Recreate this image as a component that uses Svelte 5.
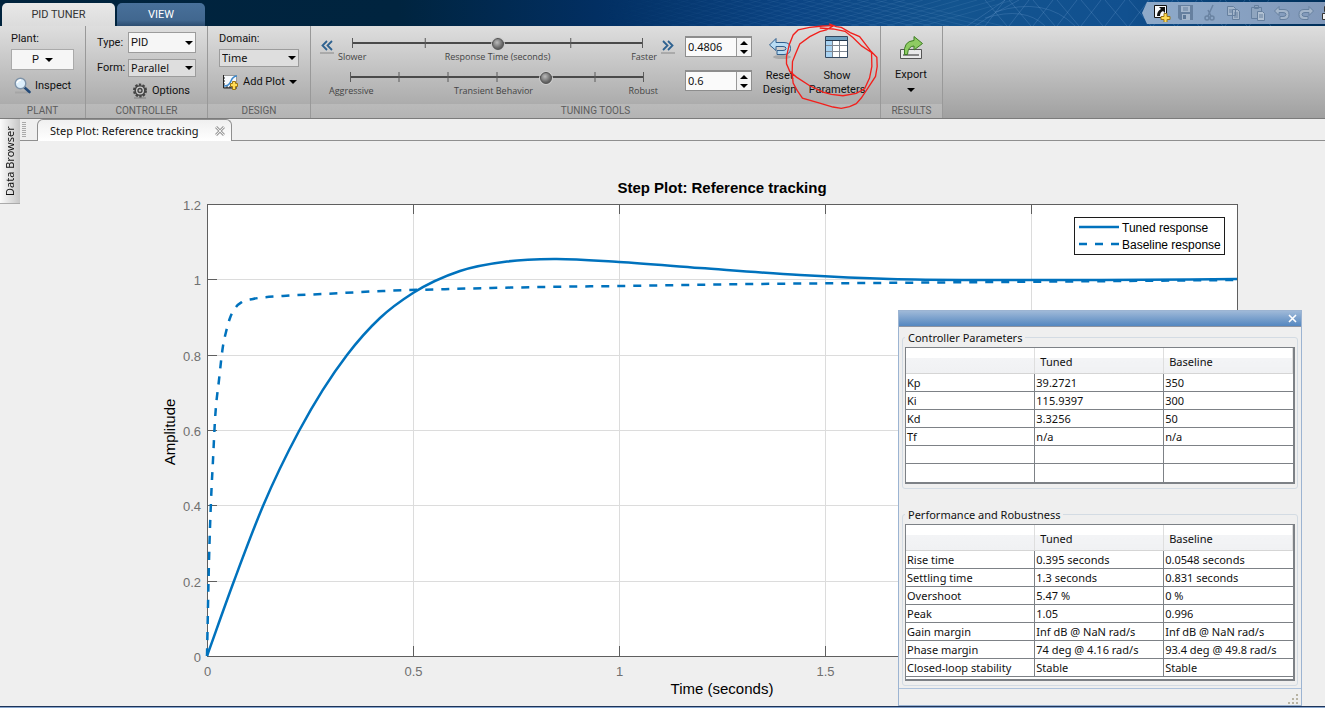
<script lang="ts">
	let plantType = 'PID';
	let form = 'Parallel';
	let domain = 'Time';
	let responseTime = 2;
	let behavior = 4;
	let responseValue = '0.4806';
	let behaviorValue = '0.6';

	const tables = [
		{
			title: 'Controller Parameters',
			rows: [
				['Kp', '39.2721', '350'],
				['Ki', '115.9397', '300'],
				['Kd', '3.3256', '50'],
				['Tf', 'n/a', 'n/a'],
				['', '', ''],
				['', '', '']
			]
		},
		{
			title: 'Performance and Robustness',
			rows: [
				['Rise time', '0.395 seconds', '0.0548 seconds'],
				['Settling time', '1.3 seconds', '0.831 seconds'],
				['Overshoot', '5.47 %', '0 %'],
				['Peak', '1.05', '0.996'],
				['Gain margin', 'Inf dB @ NaN rad/s', 'Inf dB @ NaN rad/s'],
				['Phase margin', '74 deg @ 4.16 rad/s', '93.4 deg @ 49.8 rad/s'],
				['Closed-loop stability', 'Stable', 'Stable']
			]
		}
	];

	// plot box inside the figure
	const left = 187;
	const top = 63;
	const width = 1030;
	const height = 452;
	const xTicks = [0, 0.5, 1, 1.5, 2];
	const yTicks = [0, 0.2, 0.4, 0.6, 0.8, 1, 1.2];
	const px = (x: number) => Math.round(left + (x / 2.5) * width) + 0.5;
	const py = (y: number) => Math.round(top + height - (y / 1.2) * height) + 0.5;

	const tuned = [
		[187, 515], [214, 440], [243, 365], [279, 290], [327, 214], [360, 177], [393, 152],
		[440, 130], [487, 120.500], [534, 118], [599, 121], [680, 127], [780, 134],
		[870, 138], [980, 139], [1080, 139], [1217, 138]
	];
	const baseline = [
		[187, 515], [189, 420], [191, 360], [193, 319], [195, 279], [199, 239], [203, 205],
		[206, 191], [210, 177], [216, 166], [222, 161], [233, 158], [263, 155], [303, 153],
		[363, 150], [430, 148], [523, 146], [599, 145], [735, 143], [846, 142], [980, 141], [1217, 139]
	];

	// cubic through the sampled points, slopes weighted by the spacing in x
	function curve(p: number[][]) {
		const last = p.length - 1;
		const h = p.slice(1).map((q, i) => q[0] - p[i][0]);
		const s = p.slice(1).map((q, i) => (q[1] - p[i][1]) / h[i]);
		const m = p.map((_, i) => {
			if (i === 0) return s[0];
			if (i === last) return s[last - 1];
			return (h[i] * s[i - 1] + h[i - 1] * s[i]) / (h[i - 1] + h[i]);
		});
		let d = `M${p[0][0]} ${p[0][1]}`;
		for (let i = 0; i < last; i++) {
			const k = h[i] / 3;
			const [x1, y1] = p[i];
			const [x2, y2] = p[i + 1];
			d += `C${x1 + k} ${y1 + m[i] * k} ${x2 - k} ${y2 - m[i + 1] * k} ${x2} ${y2}`;
		}
		return d;
	}
</script>

<div class="app">
	<header>
		<svg class="mesh" width="720" height="26" viewBox="0 0 720 26" aria-hidden="true">
			<g fill="none" stroke="#6f9fcf" stroke-opacity=".28">
				{#each Array(22) as _, i}
					<path d="M{i * 18 - 60} 26l90-26M{i * 18 + 20} 26l-110-26" stroke-opacity=".16" />
				{/each}
				{#each Array(12) as _, i}
					<path d="M{380 + i * 24} 26l20-26M{380 + i * 24} 0l22 26" />
				{/each}
				<path d="M370 26q20-14 44-26M362 26q30-20 38-26M390 12q50-16 80 14M380 18q40-12 60 8" />
			</g>
		</svg>
		<nav class="tabs">
			<button class="tab active">PID TUNER</button>
			<button class="tab">VIEW</button>
		</nav>
		<div class="quick">
			<button aria-label="Shortcut">
				<svg width="18" height="18" viewBox="0 0 18 18">
					<path d="M1.500 1.500h12v12h-12z" fill="#f6f8fa" stroke="#111" />
					<path d="M6 3h6v6l-2-2q-3 1-3 5H4q0-5 4-7z" fill="#111" />
					<path d="M11 9.500h3v3h3v3h-3v3h-3v-3H8v-3h3z" fill="#ffdc55" stroke="#9a7415" />
				</svg>
			</button>
			<button aria-label="Save">
				<svg width="18" height="18" viewBox="0 0 18 18">
					<path d="M1 1h15v15H3l-2-2z" fill="#66809f" />
					<path d="M4 2h9v6H4zM5 10h8v6H5z" fill="#a4b6cb" />
					<path d="M6 4h5M6 6h5" stroke="#66809f" />
					<path d="M6 11h3v4H6z" fill="#5d7897" />
				</svg>
			</button>
			<button aria-label="Cut">
				<svg width="18" height="18" viewBox="0 0 18 18" fill="none" stroke="#6a83a2" stroke-width="1.500">
					<path d="M12 1L7 12M7 6l3 6" />
					<circle cx="6" cy="14" r="2" /><circle cx="11" cy="14" r="2" />
				</svg>
			</button>
			<button aria-label="Copy">
				<svg width="18" height="18" viewBox="0 0 18 18" fill="#a4b6cb" stroke="#66809f">
					<path d="M2.500 2.500h6l2 2v7h-8zM7.500 5.500h5l2 2v8h-7z" />
					<path d="M4 6h3M4 8h3M9 9h4M9 11h4M9 13h4" />
				</svg>
			</button>
			<button aria-label="Paste">
				<svg width="18" height="18" viewBox="0 0 18 18" fill="#8fa5bf" stroke="#66809f">
					<path d="M2.500 3.500h10v11h-10zM5.500 1.500h4v3h-4z" />
					<path d="M8.500 7.500h5l2 2v7h-7z" fill="#b0c0d2" />
					<path d="M10 11h4M10 13h4" />
				</svg>
			</button>
			<button aria-label="Undo">
				<svg width="18" height="18" viewBox="0 0 18 18" fill="#a4b6cb" stroke="#66809f">
					<path d="M1.500 7L6 2.500v3h5q5 0 5 5t-5 5H7v-3h3q3 0 3-2t-3-2H6v3z" />
				</svg>
			</button>
			<button aria-label="Redo">
				<svg width="18" height="18" viewBox="0 0 18 18" fill="#a4b6cb" stroke="#66809f">
					<path d="M16.500 7L12 2.500v3H7q-5 0-5 5t5 5h4v-3H8q-3 0-3-2t3-2h4v3z" />
				</svg>
			</button>
			<button aria-label="Windows">
				<svg width="18" height="18" viewBox="0 0 18 18" fill="#f4f4f4" stroke="#333">
					<path d="M3.500 2.500h10v5h-10zM1.500 9.500h14v6h-14z" />
				</svg>
			</button>
		</div>
	</header>

	<div class="toolstrip">
		<section class="plant">
			<div class="body">
				<span>Plant:</span>
				<button class="drop">P <i class="arrow"></i></button>
				<button class="flat inspect">
					<svg width="17" height="17" viewBox="0 0 17 17">
						<path d="M1 15.500h13" stroke="#999" stroke-width="2" opacity=".5" />
						<path d="M10 10l5.500 5" stroke="#234a78" stroke-width="2.600" stroke-linecap="round" />
						<circle cx="6.500" cy="6.500" r="5.300" fill="#dceefb" stroke="#7f93a8" stroke-width="1.400" />
						<path d="M3 6q1-3 4-3" stroke="#fff" stroke-width="1.500" fill="none" />
					</svg>
					Inspect
				</button>
			</div>
			<h2>PLANT</h2>
		</section>

		<section class="controller">
			<div class="body">
				<div class="field tall">
					<label for="type">Type:</label>
					<div class="select">
						<select id="type" bind:value={plantType}><option>PID</option><option>PI</option></select>
						<i class="arrow"></i>
					</div>
				</div>
				<div class="field">
					<label for="form">Form:</label>
					<div class="select">
						<select id="form" bind:value={form}><option>Parallel</option><option>Standard</option></select>
						<i class="arrow"></i>
					</div>
				</div>
				<button class="flat options">
					<svg width="16" height="16" viewBox="0 0 16 16" fill="none">
						<path d="M2 15h12" stroke="#888" stroke-width="2" opacity=".6" />
						<circle cx="8" cy="7.500" r="6" stroke="#444" stroke-width="2" stroke-dasharray="2.400 1.370" />
						<circle cx="8" cy="7.500" r="4.800" fill="#ccc" stroke="#444" stroke-width="1.600" />
						<circle cx="8" cy="7.500" r="2" fill="#bbb" stroke="#444" stroke-width="1.400" />
					</svg>
					Options
				</button>
			</div>
			<h2>CONTROLLER</h2>
		</section>

		<section class="design">
			<div class="body">
				<label for="domain">Domain:</label>
				<div class="select">
					<select id="domain" bind:value={domain}><option>Time</option><option>Frequency</option></select>
					<i class="arrow"></i>
				</div>
				<button class="flat add-plot">
					<svg width="17" height="16" viewBox="0 0 17 16">
						<path d="M1.500 1.500h13v12h-13z" fill="#f7fafd" stroke="#999" />
						<path d="M1.500 1v13H15M1 4h2M1 7h2M1 10h2M5 14v-2M8 14v-2" stroke="#222" fill="none" />
						<path d="M2 12q5 0 7-5t6-5" fill="none" stroke="#3d87c9" stroke-width="1.600" />
						<path d="M10.500 7.500h3v2h2v3h-2v3h-3v-3h-2v-3h2z" fill="#ffdc55" stroke="#9a7415" />
					</svg>
					Add Plot <i class="arrow"></i>
				</button>
			</div>
			<h2>DESIGN</h2>
		</section>

		<section class="tuning">
			<div class="body">
				<div class="sliders">
					<div class="slider-row">
						<button class="flat chevron" aria-label="Much slower">
							<svg width="14" height="18" viewBox="0 0 14 18" fill="none" stroke="#2e6290" stroke-width="1.800">
								<path d="M7 3L2.500 7.500 7 12M12 3L7.500 7.500 12 12" />
								<path d="M0 15h14" stroke="#888" stroke-width="2" opacity=".5" />
							</svg>
						</button>
						<div class="slider">
							<div class="track">
								<svg viewBox="0 0 290 14" preserveAspectRatio="none" aria-hidden="true">
									<path d="M0 7h290" stroke="#4a4a4a" stroke-width="2" />
									<path d="M.500 2v10M73 2v10M145 2v10M218 2v10M289.500 2v10" stroke="#5a5a5a" />
								</svg>
								<input type="range" min="0" max="4" step="any" aria-label="Response Time" bind:value={responseTime} />
							</div>
							<div class="captions"><span>Slower</span><span>Response Time (seconds)</span><span>Faster</span></div>
						</div>
						<button class="flat chevron" aria-label="Much faster">
							<svg width="14" height="18" viewBox="0 0 14 18" fill="none" stroke="#2e6290" stroke-width="1.800">
								<path d="M2 3l4.500 4.500L2 12M7 3l4.500 4.500L7 12" />
								<path d="M0 15h14" stroke="#888" stroke-width="2" opacity=".5" />
							</svg>
						</button>
					</div>
					<div class="slider wide">
						<div class="track">
							<svg viewBox="0 0 294 14" preserveAspectRatio="none" aria-hidden="true">
								<path d="M0 7h294" stroke="#4a4a4a" stroke-width="2" />
								<path d="M.500 2v10M49 2v10M98 2v10M147 2v10M196 2v10M245 2v10M293.500 2v10" stroke="#5a5a5a" />
							</svg>
							<input type="range" min="0" max="6" step="any" aria-label="Transient Behavior" bind:value={behavior} />
						</div>
						<div class="captions"><span>Aggressive</span><span>Transient Behavior</span><span>Robust</span></div>
					</div>
				</div>
				<div class="spinners">
					<div class="spin">
						<input aria-label="Response time value" bind:value={responseValue} />
						<div>
							<button aria-label="Increase response time"><i class="arrow up"></i></button>
							<button aria-label="Decrease response time"><i class="arrow"></i></button>
						</div>
					</div>
					<div class="spin">
						<input aria-label="Transient behavior value" bind:value={behaviorValue} />
						<div>
							<button aria-label="Increase behavior"><i class="arrow up"></i></button>
							<button aria-label="Decrease behavior"><i class="arrow"></i></button>
						</div>
					</div>
				</div>
				<button class="flat big reset">
					<svg width="26" height="26" viewBox="0 0 26 26">
						<ellipse cx="15" cy="21" rx="9" ry="2" fill="#888" opacity=".5" />
						<path d="M2.500 9L9 2.500V6.500h8q6.500 0 6.500 6t-6.500 6h-7v-4h6q3 0 3-2t-3-2H9v4z" fill="#b9dcf3" stroke="#315f8d" />
					</svg>
					<span>Reset<br />Design</span>
				</button>
				<div class="marked">
					<button class="flat big">
						<svg width="26" height="26" viewBox="0 0 26 26">
							<path d="M1.500 .500h22v21h-22z" fill="#fff" />
							<path d="M2 4h6v17H2z" fill="#a9d3f2" />
							<path d="M2 1h21v3H2z" fill="#6d9fc0" />
							<path d="M1 4.500h23" stroke="#23374d" />
							<path d="M2 9.500h21M2 15.500h21M8.500 5v16M15.500 5v16" stroke="#7d8691" />
							<path d="M1.500 .500h22v21h-22z" fill="none" stroke="#334860" />
						</svg>
						<span>Show<br />Parameters</span>
					</button>
					<svg class="scribble" viewBox="370 0 300 280" aria-hidden="true">
						<path d="M508 12L530 20 545 22 572 38 600 50 635 95 652 112 653 140 648 170 625 205 605 235 590 252 570 261 545 266 520 262 480 250 428 235 412 212 400 190 397 160 398 125 408 100 420 72 450 50 480 35 500 30 522 17 490 18 450 22 415 30 400 45 388 75 380 110 380 132 390 155 410 172 450 198 490 217 515 224 550 228 590 221 615 207 630 175 637 140 636 98 606 78 580 53 556 34 520 27 480 24" />
					</svg>
				</div>
			</div>
			<h2>TUNING TOOLS</h2>
		</section>

		<section class="results">
			<div class="body">
				<button class="flat big">
					<svg width="26" height="26" viewBox="0 0 26 26">
						<path d="M2.500 13.500h21v9h-21z" fill="#e9e9e9" stroke="#555" />
						<path d="M5 19h16" stroke="#888" stroke-width="2" />
						<path d="M6.500 18.500Q5 5 16 4.500V.500L24.500 7.500 16 14v-4Q10 10 9.500 18.500z" fill="#8ecb62" stroke="#3d7c24" />
					</svg>
					<span>Export</span>
					<i class="arrow"></i>
				</button>
			</div>
			<h2>RESULTS</h2>
		</section>
	</div>

	<div class="workspace">
		<aside><button>Data Browser</button></aside>
		<main>
			<div class="doc-tabs">
				<i class="grip"></i>
				<div class="doc-tab">
					<span>Step Plot: Reference tracking</span>
					<button class="flat" aria-label="Close tab">
						<svg width="10" height="10" viewBox="0 0 10 10">
							<path d="M1 1l8 8M9 1L1 9" stroke="#a2a2a2" stroke-width="3" />
							<path d="M1 1l8 8M9 1L1 9" stroke="#eee" />
						</svg>
					</button>
				</div>
			</div>

			<div class="figure">
				<svg class="plot" viewBox="0 0 1305 565">
					<rect x={left + 0.5} y={top + 0.5} {width} {height} fill="#fff" stroke="#5f5f5f" />
					{#each xTicks.slice(1) as t}
						<path class="grid" d="M{px(t)} {top}v{height}" />
						<path class="tick" d="M{px(t)} {top}v10M{px(t)} {top + height}v-10" />
					{/each}
					{#each yTicks.slice(1, -1) as t}
						<path class="grid" d="M{left} {py(t)}h{width}" />
						<path class="tick" d="M{left} {py(t)}h10" />
					{/each}
					<path class="line" d={curve(tuned)} />
					<path class="line dashed" d={curve(baseline)} />
					{#each xTicks as t}
						<text class="tick-label" x={px(t)} y="535" text-anchor="middle">{t}</text>
					{/each}
					{#each yTicks as t}
						<text class="tick-label" x="181" y={py(t) + 5} text-anchor="end">{t}</text>
					{/each}
					<text class="title" x="702" y="52" text-anchor="middle">Step Plot: Reference tracking</text>
					<text class="axis" x="702" y="553" text-anchor="middle">Time (seconds)</text>
					<text class="axis" transform="translate(155 291) rotate(-90)" text-anchor="middle">Amplitude</text>
					<rect x="1054.5" y="76.5" width="150" height="37" fill="#fff" stroke="#1c1c1c" />
					<path class="line" d="M1059 86h40" />
					<path class="line dashed" d="M1059 103h40" />
					<text class="key" x="1102" y="91">Tuned response</text>
					<text class="key" x="1102" y="108">Baseline response</text>
				</svg>

				<div class="dialog" role="dialog" aria-label="Parameters">
					<div class="titlebar">
						<button aria-label="Close">
							<svg width="9" height="9" viewBox="0 0 9 9"><path d="M1 1l7 7M8 1L1 8" stroke="#fff" stroke-width="1.600" /></svg>
						</button>
					</div>
					<div class="content">
						{#each tables as table}
							<fieldset>
								<legend>{table.title}</legend>
								<div class="frame">
									<table>
										<thead>
											<tr><th></th><th>Tuned</th><th>Baseline</th></tr>
										</thead>
										<tbody>
											{#each table.rows as row}
												<tr>
													{#each row as cell}<td>{cell}</td>{/each}
												</tr>
											{/each}
										</tbody>
									</table>
								</div>
							</fieldset>
						{/each}
					</div>
					<div class="status">
						<svg width="11" height="11" viewBox="0 0 11 11" fill="#b8b4a4">
							<path d="M8 0h2v2H8zM4 4h2v2H4zM8 4h2v2H8zM0 8h2v2H0zM4 8h2v2H4zM8 8h2v2H8z" />
						</svg>
					</div>
				</div>
			</div>
		</main>
	</div>
	<footer></footer>
</div>

<style>
	:global(body) {
		margin: 0;
		background: #efefef;
	}

	.app {
		display: flex;
		flex-direction: column;
		min-height: 100vh;
		font: 11px/14px Roboto, 'Liberation Sans', sans-serif;
		color: #111;
	}

	.app :is(button, input, select) {
		font: inherit;
		color: inherit;
		margin: 0;
		padding: 0;
		border: none;
		box-sizing: border-box;
	}

	button svg {
		display: block;
		flex: none;
	}

	header {
		position: relative;
		display: flex;
		justify-content: space-between;
		height: 26px;
		overflow: hidden;
		background: linear-gradient(90deg, #00233d 0%, #00243f 30%, #022f62 45%, #0b4484 60%, #13548f 72%, #11508f 85%, #023766 96%, #002f5a);
	}

	.mesh {
		position: absolute;
		right: 0;
		top: 0;
		mask-image: linear-gradient(90deg, transparent, #000 40%);
	}

	.tabs {
		display: flex;
		align-items: flex-end;
		gap: 2px;
		padding-left: 2px;
	}

	.app .tab {
		width: 88px;
		height: 23px;
		border-radius: 5px 5px 0 0;
		color: #fff;
		background: linear-gradient(#48709a, #41678f 75%, #2c4d70);
	}

	.app .tab.active {
		width: 113px;
		color: #333;
		background: linear-gradient(#e8e8e8, #dcdcdc);
	}

	.quick {
		position: relative;
		display: flex;
		align-items: center;
		gap: 6px;
		width: 172px;
		height: 22px;
		margin-top: 2px;
		padding-left: 11px;
		overflow: hidden;
		background: linear-gradient(90deg, #8eaaca, #8299ba);
		clip-path: polygon(5px 0, 100% 0, 100% 100%, 5px 100%, 0 50%);
	}

	.quick button {
		flex: none;
		background: none;
	}

	.toolstrip {
		display: flex;
		height: 92px;
		border-bottom: 1px solid #7b7b7b;
		background: linear-gradient(#dedede, #a0a0a0);
	}

	section {
		display: flex;
		flex-direction: column;
		box-sizing: border-box;
		border-right: 1px solid #999;
		background: linear-gradient(#dedede, #acacac 78px, #bababa 78px, #b4b4b4);
	}

	h2 {
		margin: 0;
		font-size: 10px;
		font-weight: 400;
		line-height: 14px;
		text-align: center;
		color: #5c5c5c;
	}

	.body {
		height: 78px;
		box-sizing: border-box;
		padding: 6px 11px 0;
	}

	.plant {
		width: 86px;
	}

	.controller {
		width: 122px;
	}

	.design {
		width: 103px;
	}

	.tuning {
		width: 570px;
	}

	.results {
		width: 62px;
	}

	.plant .body,
	.design .body {
		display: flex;
		flex-direction: column;
		gap: 3px;
	}

	.arrow {
		display: inline-block;
		border: 4px solid transparent;
		border-top-color: #000;
		border-bottom: none;
	}

	.arrow.up {
		border-top: none;
		border-bottom: 4px solid #000;
	}

	.app .drop {
		display: flex;
		align-items: center;
		justify-content: center;
		gap: 6px;
		height: 21px;
		border: 1px solid #aaa;
		background: #f6f6f6;
	}

	.app .flat {
		display: flex;
		align-items: center;
		background: none;
	}

	.app .inspect {
		gap: 4px;
		margin: 4px 0 0 3px;
	}

	.controller .body {
		display: flex;
		flex-direction: column;
		gap: 6px;
	}

	.field {
		display: flex;
		align-items: center;
		justify-content: space-between;
	}

	.select {
		position: relative;
		width: 68px;
		height: 18px;
	}

	.design .select {
		width: 80px;
	}

	.select select {
		width: 100%;
		height: 100%;
		padding-left: 2px;
		border: 1px solid #9c9c9c;
		border-radius: 0;
		appearance: none;
		background: #dedede;
		font-family: 'Noto Sans', sans-serif;
	}

	.tall .select {
		height: 21px;
	}

	.tall select {
		background: #f6f6f6;
		font-family: Roboto, sans-serif;
	}

	.select .arrow {
		position: absolute;
		right: 3px;
		top: 50%;
		margin-top: -2px;
		pointer-events: none;
	}

	.app .options {
		gap: 4px;
		margin-left: 35px;
	}

	.app .add-plot {
		gap: 4px;
		margin: 4px 0 0 3px;
		white-space: nowrap;
	}

	.tuning .body {
		display: flex;
		padding: 10px 9px 0;
	}

	.sliders {
		width: 355px;
		display: flex;
		flex-direction: column;
		gap: 6px;
	}

	.slider-row {
		display: flex;
		gap: 4px;
	}

	.slider {
		flex: 1;
	}

	.slider.wide {
		margin: 0 17px 0 9px;
	}

	.track {
		position: relative;
		height: 14px;
		margin: 0 14px;
	}

	.wide .track {
		margin: 0 14px 0 21px;
	}

	.track svg {
		display: block;
		width: 100%;
		height: 14px;
	}

	.app .track input {
		position: absolute;
		left: -6px;
		top: 1px;
		width: calc(100% + 12px);
		height: 14px;
		appearance: none;
		background: none;
	}

	.track input::-webkit-slider-thumb {
		appearance: none;
		width: 12px;
		height: 12px;
		border: 1px solid #555;
		border-radius: 50%;
		background: radial-gradient(circle at 40% 35%, #bbb, #6a6a6a 60%, #444);
		box-shadow: 0 0 0 1px #ccc;
	}

	.captions {
		display: grid;
		grid-template-columns: 1fr auto 1fr;
		font: 9px/14px 'Open Sans', sans-serif;
		color: #444;
	}

	.captions span:last-child {
		text-align: right;
	}

	.app .chevron {
		align-items: flex-start;
		padding-top: 2px;
	}

	.spinners {
		display: flex;
		flex-direction: column;
		gap: 13px;
		margin-left: 10px;
	}

	.spin {
		display: flex;
		width: 67px;
		height: 21px;
		box-sizing: border-box;
		border: 1px solid #8d8d8d;
		border-top-width: 2px;
	}

	.spin input {
		width: 50px;
		padding-left: 2px;
		font-family: 'Noto Sans', sans-serif;
		background: #fafafa;
	}

	.spin div {
		display: flex;
		flex: 1;
		flex-direction: column;
		border-left: 1px solid #999;
	}

	.spin button {
		display: flex;
		flex: 1;
		align-items: center;
		justify-content: center;
		background: #f4f4f4;
	}

	.app .big {
		flex: none;
		flex-direction: column;
		justify-content: flex-start;
		gap: 7px;
		width: 60px;
		text-align: center;
	}

	.app .reset {
		width: 55px;
	}

	.marked {
		position: relative;
	}

	.scribble {
		position: absolute;
		left: -24px;
		top: -16px;
		width: 100px;
		height: 93px;
		fill: none;
		stroke: #f2201c;
		stroke-width: 4;
		pointer-events: none;
	}

	.results .body {
		padding: 10px 0 0;
	}

	.results .big {
		gap: 6px;
	}

	.workspace {
		display: flex;
		flex: 1;
	}

	aside {
		width: 20px;
	}

	.app aside button {
		width: 20px;
		height: 85px;
		border-top: 1px solid #aaa;
		writing-mode: vertical-rl;
		transform: rotate(180deg);
		background: linear-gradient(90deg, #c6c6c6, #fbfbfb);
		font-family: 'Noto Sans', sans-serif;
	}

	main {
		flex: 1;
		min-width: 0;
	}

	.doc-tabs {
		display: flex;
		height: 21px;
		border-bottom: 1px solid #8f8f8f;
	}

	.grip {
		width: 4px;
		height: 15px;
		margin: 3px 11px 0 2px;
		background: repeating-linear-gradient(#aaa 0 1px, transparent 1px 2px);
	}

	.doc-tab {
		display: flex;
		align-items: center;
		justify-content: space-between;
		width: 195px;
		height: 22px;
		padding: 0 6px 0 12px;
		box-sizing: border-box;
		border: 1px solid #8f8f8f;
		border-bottom: none;
		border-radius: 6px 6px 0 0;
		background: linear-gradient(#f0f0f0, #fff);
		font: 11px/14px 'Noto Sans', sans-serif;
	}

	.figure {
		position: relative;
	}

	.plot {
		display: block;
		width: 100%;
		font-family: 'Liberation Sans', Arial, sans-serif;
	}

	.grid {
		stroke: #dcdcdc;
	}

	.tick {
		stroke: #5f5f5f;
	}

	.line {
		fill: none;
		stroke: #0072bd;
		stroke-width: 2.5;
	}

	.dashed {
		stroke-dasharray: 8 8;
	}

	.tick-label {
		font-size: 13px;
		fill: #707070;
	}

	.title {
		font-size: 15px;
		font-weight: 700;
	}

	.axis {
		font-size: 15px;
	}

	.key {
		font-size: 12px;
	}

	.dialog {
		position: absolute;
		right: 23px;
		bottom: 0;
		width: 404px;
		box-sizing: border-box;
		border: 1px solid #9cb4d2;
		background: #efefef;
		font: 11px/14px 'Noto Sans', sans-serif;
	}

	.titlebar {
		display: flex;
		align-items: center;
		justify-content: flex-end;
		height: 15px;
		padding-right: 4px;
		border-bottom: 1px solid #8d93a0;
		background: linear-gradient(#9fb9d8, #5487c0);
	}

	.titlebar button {
		background: none;
	}

	.content {
		display: flex;
		flex-direction: column;
		gap: 19px;
		padding: 4px 3px 2px;
		border-bottom: 1px solid #adc2dc;
	}

	fieldset {
		min-width: 0;
		margin: 0;
		padding: 2px 2px 4px;
		border: 1px solid #d3dbe3;
		border-radius: 3px;
	}

	legend {
		padding: 0 3px;
	}

	.frame {
		border: 1px solid #7d8186;
		border-right-width: 2px;
		border-bottom-width: 2px;
		background: #fff;
	}

	fieldset:last-child .frame {
		padding-bottom: 2px;
	}

	table {
		width: 100%;
		table-layout: fixed;
		border-collapse: collapse;
	}

	th {
		height: 26px;
		padding: 4px 5px 0;
		box-sizing: border-box;
		border-right: 1px solid #dedede;
		border-bottom: 1px solid #d5d5d5;
		background: linear-gradient(#fff 40%, #f3f4f6 40%, #f0f1f3);
		font-weight: 400;
		text-align: left;
	}

	td {
		height: 18px;
		padding: 0 1px;
		box-sizing: border-box;
		border-right: 1px solid #7d8186;
		border-bottom: 1px solid #7d8186;
		white-space: nowrap;
	}

	td:last-child {
		border-right: none;
	}

	fieldset:first-child tr:last-child td {
		border-bottom: none;
	}

	.status {
		display: flex;
		align-items: flex-end;
		justify-content: flex-end;
		height: 16px;
		padding-right: 2px;
	}

	footer {
		height: 2px;
		background: linear-gradient(#1d3358 50%, #87a5cd 50%);
	}
</style>
